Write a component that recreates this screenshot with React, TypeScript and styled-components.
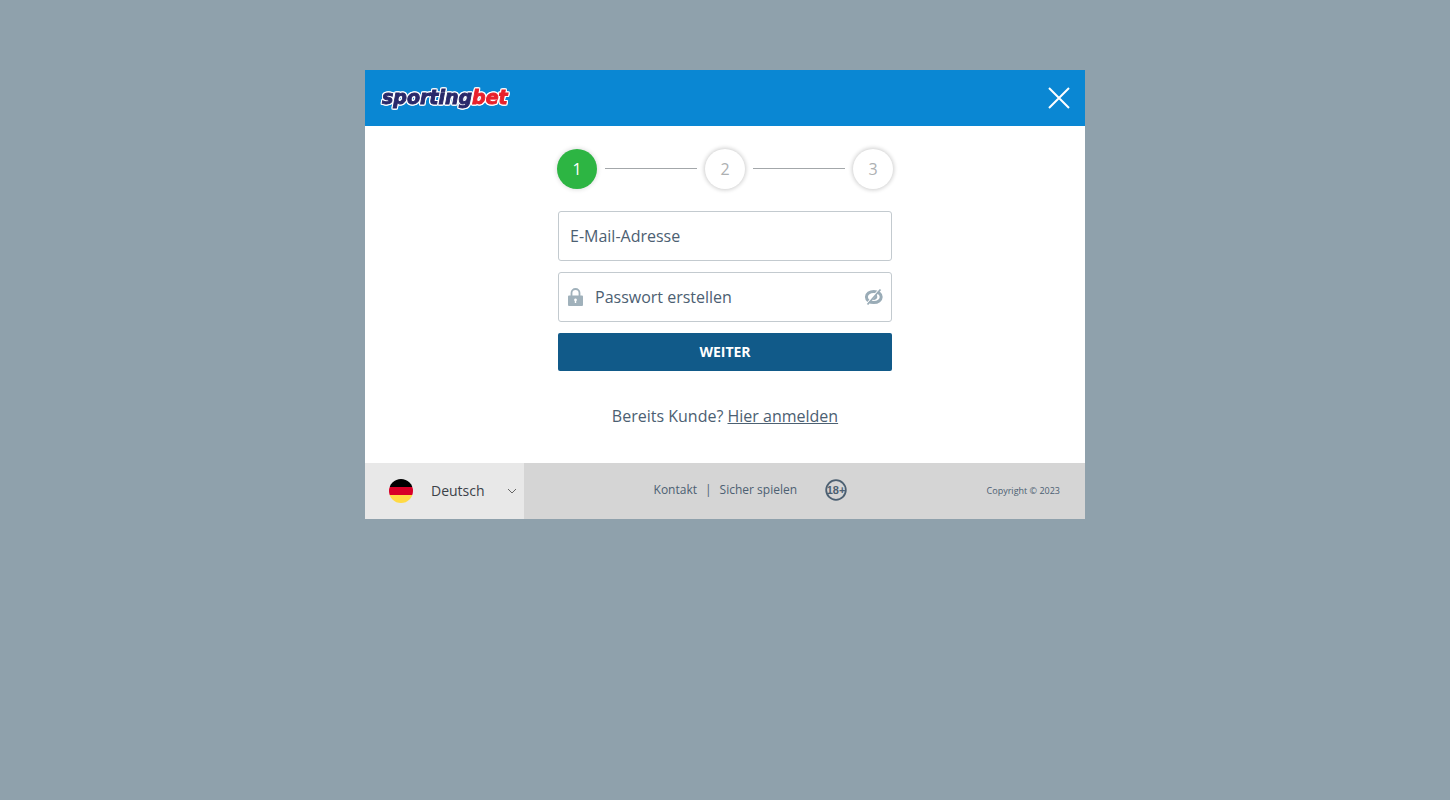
import React, { Fragment } from "react";
import styled, { createGlobalStyle } from "styled-components";

const GlobalStyle = createGlobalStyle`
  *, *::before, *::after { box-sizing: border-box; }
  body {
    margin: 0;
    background: #8fa1ac;
    color: #4c6072;
    font-family: "Open Sans", "Noto Sans", sans-serif;
    font-size: 16px;
    line-height: 24px;
  }
  button, input, select { font: inherit; color: inherit; }
`;

const Page = styled.main`
  display: flex;
  justify-content: center;
  padding-top: 70px;
`;

const Dialog = styled.section`
  width: 100%;
  max-width: 720px;
  background: #fff;
`;

const Header = styled.header`
  display: flex;
  align-items: center;
  justify-content: space-between;
  height: 56px;
  padding: 0 15px;
  background: #0a87d3;
`;

const LogoLink = styled.a`
  display: flex;
`;

const LogoText = styled.text`
  font-family: "DejaVu Sans", sans-serif;
  font-size: 19px;
  font-weight: 700;
  font-style: italic;
  filter: drop-shadow(1px 0 0 #fff) drop-shadow(-1px 0 0 #fff) drop-shadow(0 1px 0 #fff) drop-shadow(0 -1px 0 #fff);
`;

const IconButton = styled.button`
  display: flex;
  padding: 0;
  border: 0;
  background: none;
  cursor: pointer;
`;

const Form = styled.form`
  display: flex;
  flex-direction: column;
  max-width: 336px;
  margin: 0 auto;
  padding: 23px 0 35px;
`;

const Steps = styled.ol`
  display: flex;
  align-items: center;
  gap: 8px;
  margin: 0 0 22px;
  padding: 0;
  list-style: none;
`;

const Step = styled.li<{ $active?: boolean }>`
  display: grid;
  place-items: center;
  flex: none;
  width: 40px;
  height: 40px;
  border-radius: 50%;
  background: ${({ $active }) => ($active ? "#2db543" : "#fff")};
  color: ${({ $active }) => ($active ? "#fff" : "#adb0b2")};
  box-shadow: 0 0 4px 1px rgba(0, 0, 0, ${({ $active }) => ($active ? 0.12 : 0.2)});
`;

const StepLine = styled.li`
  flex: 1;
  height: 1px;
  margin-bottom: 1px;
  background: #a3a7aa;
`;

const Fields = styled.div`
  display: flex;
  flex-direction: column;
  gap: 11px;
  padding: 0 1px;
`;

const Field = styled.div`
  display: flex;
  align-items: center;
  gap: 8px;
  height: 50px;
  padding: 0 7px 0 8px;
  border: 1px solid #c3cacf;
  border-radius: 3px;
`;

const InputArea = styled.div`
  display: grid;
  flex: 1;
  align-items: center;
  min-width: 0;
  padding-left: 3px;

  > * { grid-area: 1 / 1; }
`;

const Label = styled.label`
  pointer-events: none;
`;

const Input = styled.input`
  min-width: 0;
  width: 100%;
  padding: 0;
  border: 0;
  outline: 0;
  background: none;

  &:not(:placeholder-shown) + ${Label} { visibility: hidden; }
`;

const SubmitButton = styled.button`
  height: 38px;
  border: 0;
  border-radius: 2px;
  background: #115a89;
  color: #fff;
  font-size: 14px;
  font-weight: 700;
  cursor: pointer;
`;

const Login = styled.p`
  margin: 33px 0 0;
  text-align: center;
`;

const TextLink = styled.a`
  color: inherit;
`;

const Footer = styled.footer`
  display: flex;
  align-items: center;
  height: 56px;
  padding-right: 25px;
  background: #d5d5d5;
`;

const Language = styled.div`
  display: grid;
  grid-template-columns: 24px 1fr 10px;
  align-items: center;
  column-gap: 18px;
  width: 159px;
  height: 100%;
  padding: 0 7px 0 24px;
  background: #e8e8e8;
`;

const LanguageSelect = styled.select`
  appearance: none;
  min-width: 0;
  padding: 0;
  border: 0;
  outline: 0;
  background: none;
  color: #3c4248;
  font-size: 14px;
`;

const FooterNav = styled.nav`
  display: flex;
  align-items: center;
  justify-content: center;
  flex: 1;
  gap: 8px;
  padding-bottom: 2px;
  font-size: 12px;
`;

const FooterLink = styled.a`
  color: inherit;
  text-decoration: none;
`;

const AgeLink = styled(FooterLink)`
  display: flex;
  margin-left: 20px;
`;

const AgeText = styled.text`
  font-family: "Liberation Sans Narrow", "Liberation Sans", sans-serif;
  font-size: 11px;
  font-weight: 700;
`;

const Copyright = styled.small`
  padding-left: 10px;
  font-size: 9px;
`;

const Logo = () => (
  <svg width="132" height="28" viewBox="0 0 132 28" role="img" aria-label="sportingbet">
    <LogoText x="2" y="20" strokeWidth="0.9" fill="#29296a" stroke="#29296a">
      sporting<tspan fill="#e8212c" stroke="#e8212c">bet</tspan>
    </LogoText>
  </svg>
);

const CloseIcon = () => (
  <svg width="22" height="22" viewBox="0 0 22 22" aria-hidden="true">
    <path d="M1 1 21 21M21 1 1 21" stroke="#fff" strokeWidth="2" />
  </svg>
);

const LockIcon = () => (
  <svg width="17" height="20" viewBox="0 0 17 20" aria-hidden="true">
    <path d="M4.5 9V6a4 4 0 0 1 8 0V9" fill="none" stroke="#a0b1bb" strokeWidth="1.8" />
    <path d="M2 8.5h13a1 1 0 0 1 1 1V18a1 1 0 0 1-1 1H2a1 1 0 0 1-1-1V9.5a1 1 0 0 1 1-1Z" fill="#a0b1bb" />
    <path d="M8.5 11.5a1.4 1.4 0 0 0-.7 2.6V16h1.4v-1.9a1.4 1.4 0 0 0-.7-2.6Z" fill="#fff" />
  </svg>
);

const HiddenEyeIcon = () => (
  <svg width="20" height="18" viewBox="0 0 20 18" aria-hidden="true">
    <ellipse cx="9.8" cy="9" rx="7.4" ry="5.6" fill="none" stroke="#9aacb7" strokeWidth="3" />
    <path d="M12.5 6.5c1.800 2.800.5 5.500-3.800 5.500Z" fill="#9aacb7" />
    <path d="M2.700 15.700 15.700.7" stroke="#fff" strokeWidth="1.200" />
    <path d="M3.500 16.500 16.500 1.500" stroke="#9aacb7" strokeWidth="1.800" />
  </svg>
);

const GermanFlag = () => (
  <svg width="24" height="24" viewBox="0 0 24 24" aria-hidden="true">
    <clipPath id="flag-circle">
      <circle cx="12" cy="12" r="12" />
    </clipPath>
    <g clipPath="url(#flag-circle)">
      <path d="M0 0h24v8H0z" fill="#000" />
      <path d="M0 8h24v8H0z" fill="#d80027" />
      <path d="M0 16h24v8H0z" fill="#ffda44" />
    </g>
  </svg>
);

const Chevron = () => (
  <svg width="10" height="6" viewBox="0 0 10 6" aria-hidden="true">
    <path d="m1 1 4 4 4-4" fill="none" stroke="#666" />
  </svg>
);

const AgeIcon = () => (
  <svg width="22" height="22" viewBox="0 0 22 22" role="img" aria-label="18+">
    <circle cx="11" cy="11" r="9.8" fill="none" stroke="#4c6072" strokeWidth="1.8" />
    <AgeText x="11" y="15" textAnchor="middle" fill="#4c6072">18+</AgeText>
  </svg>
);

const steps = [1, 2, 3];

export default function App() {
  return (
    <>
      <GlobalStyle />
      <Page>
        <Dialog>
          <Header>
            <LogoLink href="#"><Logo /></LogoLink>
            <IconButton type="button" aria-label="Schließen"><CloseIcon /></IconButton>
          </Header>
          <Form onSubmit={(event: React.FormEvent) => event.preventDefault()}>
            <Steps>
              {steps.map((step) => (
                <Fragment key={step}>
                  {step > 1 && <StepLine aria-hidden="true" />}
                  <Step $active={step === 1}>{step}</Step>
                </Fragment>
              ))}
            </Steps>
            <Fields>
              <Field>
                <InputArea>
                  <Input id="email" type="email" placeholder=" " />
                  <Label htmlFor="email">E-Mail-Adresse</Label>
                </InputArea>
              </Field>
              <Field>
                <LockIcon />
                <InputArea>
                  <Input id="password" type="password" placeholder=" " />
                  <Label htmlFor="password">Passwort erstellen</Label>
                </InputArea>
                <IconButton type="button" aria-label="Passwort anzeigen"><HiddenEyeIcon /></IconButton>
              </Field>
              <SubmitButton type="submit">WEITER</SubmitButton>
            </Fields>
            <Login>
              Bereits Kunde? <TextLink href="#">Hier anmelden</TextLink>
            </Login>
          </Form>
          <Footer>
            <Language>
              <GermanFlag />
              <LanguageSelect aria-label="Sprache"><option>Deutsch</option></LanguageSelect>
              <Chevron />
            </Language>
            <FooterNav>
              <FooterLink href="#">Kontakt</FooterLink>
              <span>|</span>
              <FooterLink href="#">Sicher spielen</FooterLink>
              <AgeLink href="#"><AgeIcon /></AgeLink>
            </FooterNav>
            <Copyright>Copyright © 2023</Copyright>
          </Footer>
        </Dialog>
      </Page>
    </>
  );
}
